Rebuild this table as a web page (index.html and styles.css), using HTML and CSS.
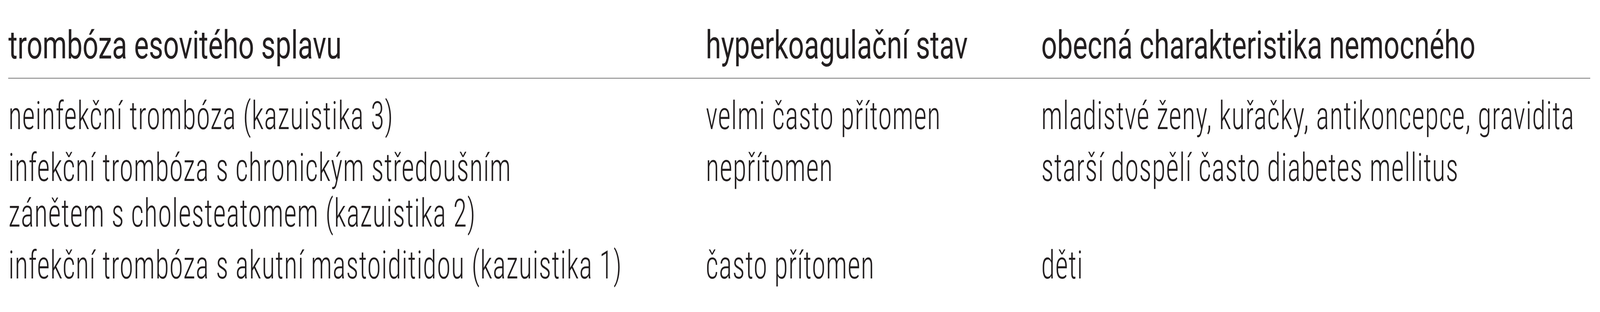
FILE: index.html
```html
<!DOCTYPE html>
<html lang="cs">
<head>
<meta charset="utf-8">
<title>Trombóza esovitého splavu</title>
<link rel="stylesheet" href="styles.css">
</head>
<body>
<div class="frame">
  <div class="table">
    <div class="row head">
      <div class="cell">trombóza esovitého splavu</div>
      <div class="cell">hyperkoagulační stav</div>
      <div class="cell">obecná charakteristika nemocného</div>
    </div>
    <div class="body">
      <div class="row">
        <div class="cell">neinfekční trombóza (kazuistika 3)</div>
        <div class="cell">velmi často přítomen</div>
        <div class="cell">mladistvé ženy, kuřačky, antikoncepce, gravidita</div>
      </div>
      <div class="row">
        <div class="cell">infekční trombóza s chronickým středoušním<br>zánětem s cholesteatomem (kazuistika 2)</div>
        <div class="cell">nepřítomen</div>
        <div class="cell">starší dospělí často diabetes mellitus</div>
      </div>
      <div class="row">
        <div class="cell">infekční trombóza s akutní mastoiditidou (kazuistika 1)</div>
        <div class="cell">často přítomen</div>
        <div class="cell">děti</div>
      </div>
    </div>
  </div>
</div>
<script src="script.js"></script>
</body>
</html>
```
FILE: styles.css
```css
/* 1rem = 100 pixels of the 5747px wide reference frame */
html {
  font-size: calc(100vw / 57.47);
  background: #ffffff;
  height: 100%;
}

body {
  margin: 0;
  padding: 0;
  height: 100%;
  font-family: "Roboto", "Liberation Sans", sans-serif;
  color: #231f20;
}

/* script.js stretches the frame vertically so that 8rem fill the 800px high window */
.frame {
  width: 100%;
  height: 8rem;
  transform-origin: 0 0;
}

.table {
  margin-left: 0.30rem;
  width: 56.82rem;
}

.row {
  display: grid;
  grid-template-columns: 25.05rem 12.05rem 1fr;
  padding: 0.08rem 0;
}

.cell {
  font-size: 1rem;
  line-height: 1.17rem;
  white-space: nowrap;
}

.head {
  padding: 0.58rem 0 0.24rem;
  border-bottom: 0.04rem solid #9a9a9a;
}

.head .cell {
  font-family: "Roboto", "Liberation Sans", sans-serif;
  font-weight: 400;
}

.body {
  padding-top: 0.29rem;
}

.body .cell {
  font-family: "Roboto Condensed", "Roboto", "Liberation Sans Narrow", sans-serif;
  font-weight: 300;
  letter-spacing: 0.016rem;
}
```
FILE: script.js
```js
(function () {
  var frame = document.querySelector('.frame');
  function fit() {
    var s = 5747 / window.innerWidth * (window.innerHeight / 800);
    frame.style.transform = 'scaleY(' + s + ')';
  }
  fit();
  window.addEventListener('resize', fit);
})();
```
